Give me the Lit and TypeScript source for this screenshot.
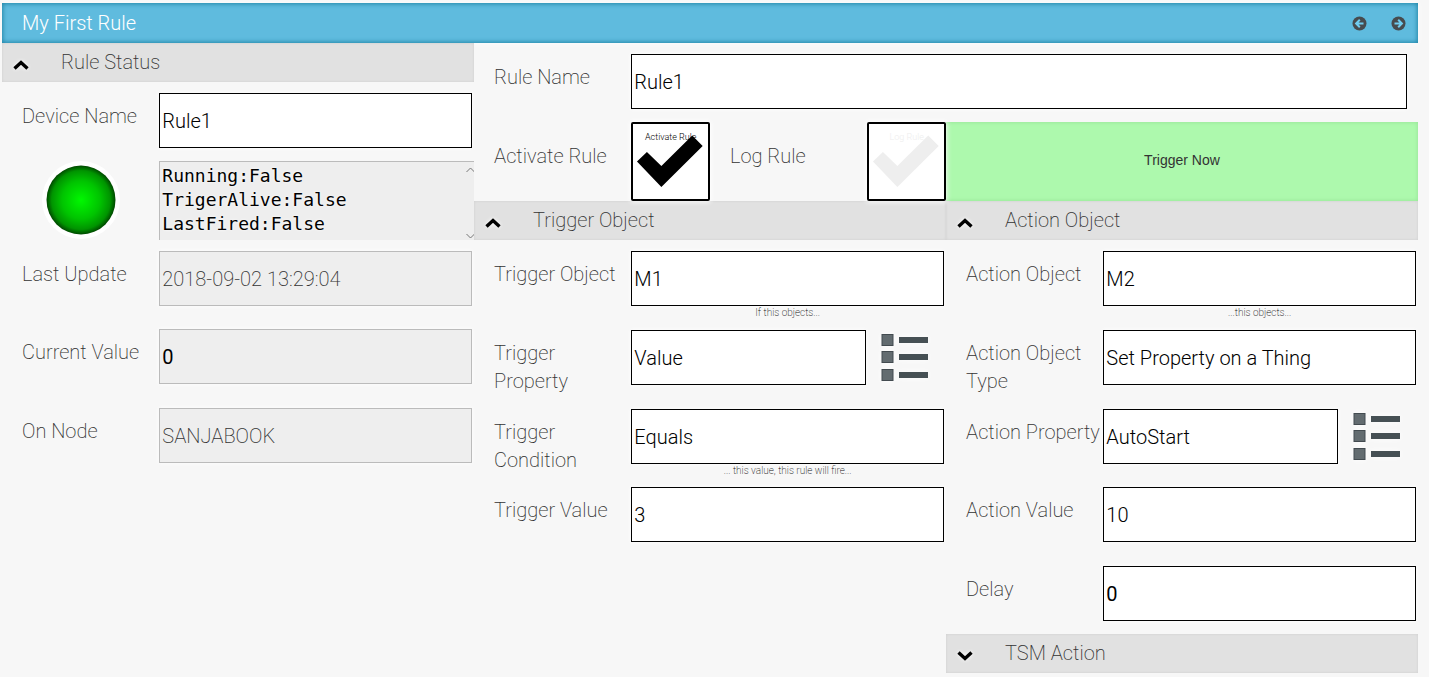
import { LitElement, html, css, svg, nothing } from "lit";
import { customElement, property, state } from "lit/decorators.js";
import { classMap } from "lit/directives/class-map.js";

interface Field {
  id: string;
  label: string;
  value: string;
  hint?: string;
  locked?: boolean;
  numeric?: boolean;
  picker?: boolean;
}

const STATUS_FIELDS: Field[] = [
  { id: "last-update", label: "Last Update", value: "2018-09-02 13:29:04", locked: true },
  { id: "current-value", label: "Current Value", value: "0", locked: true, numeric: true },
  { id: "on-node", label: "On Node", value: "SANJABOOK", locked: true },
];

const TRIGGER_FIELDS: Field[] = [
  { id: "trigger-object", label: "Trigger Object", value: "M1", hint: "If this objects..." },
  { id: "trigger-property", label: "Trigger Property", value: "Value", picker: true },
  { id: "trigger-condition", label: "Trigger Condition", value: "Equals", hint: "... this value, this rule will fire..." },
  { id: "trigger-value", label: "Trigger Value", value: "3" },
];

const ACTION_FIELDS: Field[] = [
  { id: "action-object", label: "Action Object", value: "M2", hint: "...this objects..." },
  { id: "action-type", label: "Action Object Type", value: "Set Property on a Thing" },
  { id: "action-property", label: "Action Property", value: "AutoStart", picker: true },
  { id: "action-value", label: "Action Value", value: "10" },
  { id: "delay", label: "Delay", value: "0", numeric: true },
];

const STATUS_TEXT = "Running:False\nTrigerAlive:False\nLastFired:False";

@customElement("rule-section")
class RuleSection extends LitElement {
  @property() heading = "";
  @property({ type: Boolean }) open = false;

  static styles = css`
    :host { display: block; min-width: 0; }
    .bar {
      display: flex;
      align-items: center;
      gap: 32px;
      width: 100%;
      height: 39px;
      padding: 0 11px;
      border: 0;
      background: #e1e1e1;
      box-shadow: inset 0 0 3px #cfcfcf;
      color: #333;
      font: 200 20px/28px Roboto, sans-serif;
      text-align: left;
    }
    .bar svg { flex: none; margin-top: 4px; filter: drop-shadow(0 0 2px #fff); }
    .title { margin-top: -2px; }
    .down svg { transform: scaleY(-1); }
    .rows { display: grid; grid-auto-rows: 79px 79px 78px; }
  `;

  render() {
    return html`
      <button
        class=${classMap({ bar: true, down: !this.open })}
        aria-expanded=${this.open ? "true" : "false"}
        @click=${() => (this.open = !this.open)}
      >
        <svg width="16" height="10" viewBox="0 0 16 10" aria-hidden="true">
          <path d="M1.5 8.5 8 2.5 14.5 8.5" fill="none" stroke="#000" stroke-width="3.4" />
        </svg>
        <span class="title">${this.heading}</span>
      </button>
      ${this.open ? html`<div class="rows"><slot></slot></div>` : nothing}
    `;
  }
}

@customElement("rule-field")
class RuleField extends LitElement {
  @property({ attribute: false }) field!: Field;

  static styles = css`
    * { box-sizing: border-box; }
    :host { display: block; min-width: 0; }
    .row { display: grid; grid-template-columns: 1fr 2fr; align-items: start; }
    label {
      padding: 20px 0 0 20px;
      color: #333;
      font: 200 20px/28px Roboto, sans-serif;
    }
    .control { display: grid; grid-template-columns: minmax(0, 1fr); padding: 11px 2px 0 0; }
    .control.picker { grid-template-columns: minmax(0, 3fr) minmax(0, 1fr); }
    input {
      width: 100%;
      height: 55px;
      padding: 0 2px;
      border: 1px solid #000;
      border-radius: 0;
      background: #fff;
      box-shadow: 0 0 5px #fff;
      color: #000;
      font: 300 20px Roboto, sans-serif;
    }
    input.locked { border-color: #bbb; background: #eee; color: #333; font-weight: 200; }
    input.numeric { color: #000; font-weight: 400; }
    .hint {
      color: #111;
      font: 200 10px/13px Roboto, sans-serif;
      text-align: center;
    }
    .pick {
      display: grid;
      place-items: center;
      padding: 0;
      border: 0;
      background: none;
    }
    .pick svg { filter: drop-shadow(0 0 3px #fff); }
  `;

  render() {
    const f = this.field;
    return html`
      <div class="row">
        <label for=${f.id}>${f.label}</label>
        <div class=${classMap({ control: true, picker: !!f.picker })}>
          <input
            id=${f.id}
            class=${classMap({ locked: !!f.locked, numeric: !!f.numeric })}
            .value=${f.value}
            ?readonly=${!!f.locked}
          />
          ${f.picker
            ? html`<button class="pick" aria-label="Choose property">
                <svg width="48" height="48" viewBox="0 0 48 48" aria-hidden="true">
                  ${[0, 17, 35].map(
                    (y) => svg`
                      <rect x="1" y=${y + 0.5} width="11" height="11" fill="#636c70" stroke="#434b50" />
                      <rect x="18" y=${y + 3} width="29" height="6" fill="#465054" />`
                  )}
                </svg>
              </button>`
            : nothing}
          ${f.hint ? html`<div class="hint">${f.hint}</div>` : nothing}
        </div>
      </div>
    `;
  }
}

@customElement("app-root")
class AppRoot extends LitElement {
  @state() activate = true;
  @state() log = false;

  static styles = css`
    * { box-sizing: border-box; }
    :host {
      display: block;
      min-height: 100vh;
      padding: 3px 11px 0 2px;
      box-sizing: border-box;
      background: #f7f7f7;
      color: #333;
      font: 200 20px/28px Roboto, sans-serif;
    }
    .titlebar {
      display: flex;
      align-items: center;
      justify-content: space-between;
      height: 40px;
      padding: 0 12px 0 20px;
      background: #5fbbde;
      box-shadow: inset 0 0 4px 1px #2287a9, 0 0 6px #fff;
      color: #fff;
    }
    h1 { margin: 0; font: inherit; font-weight: 300; }
    nav { display: flex; gap: 24px; }
    nav button { display: flex; padding: 0; border: 0; background: none; }
    .page { display: grid; grid-template-columns: minmax(0, 1fr) minmax(0, 2fr); }
    .cell { display: grid; grid-template-columns: 1fr 2fr; min-height: 0; }
    .led { display: grid; justify-content: center; align-content: start; }
    .console { position: relative; overflow: hidden; }
    textarea {
      display: block;
      width: 100%;
      height: 79px;
      padding: 2px;
      border: solid #bbb;
      border-width: 1px 0 0 1px;
      border-radius: 0;
      background: #eee;
      color: #000;
      font: 18px/24px "DejaVu Sans Mono", monospace;
      text-shadow: 0 0 3px #fff;
      white-space: pre;
      resize: none;
      overflow: hidden;
    }
    .scroll { position: absolute; top: 0; right: 0; pointer-events: none; }
    .top { display: grid; grid-template-columns: repeat(12, minmax(0, 1fr)); grid-auto-rows: 79px; }
    .label { grid-column: span 2; padding: 20px 0 0 20px; }
    .name { grid-column: span 10; padding: 11px 11px 0 0; }
    .name input {
      width: 100%;
      height: 55px;
      padding: 0 2px;
      border: 1px solid #000;
      border-radius: 0;
      background: #fff;
      box-shadow: 0 0 5px #fff;
      color: #000;
      font: 300 20px Roboto, sans-serif;
    }
    .toggle {
      position: relative;
      border: 2px solid #000;
      border-radius: 2px;
      background: #fff;
      box-shadow: 0 0 5px 1px #fff;
      color: #000;
    }
    .toggle input { position: absolute; inset: 0; width: 100%; height: 100%; margin: 0; opacity: 0; }
    .toggle svg { position: absolute; inset: 0; width: 100%; height: 100%; }
    .toggle span {
      display: block;
      padding-top: 7px;
      font: 300 9px/13px Roboto, sans-serif;
      text-align: center;
      white-space: nowrap;
    }
    .toggle.off { color: #eee; }
    .fire {
      grid-column: span 6;
      padding: 0 0 4px;
      border: 0;
      background: #adf9ad;
      box-shadow: inset 0 0 4px #95e295;
      color: #333;
      font: 14px "Liberation Sans", Arial, sans-serif;
    }
    .objects { display: grid; grid-template-columns: repeat(2, minmax(0, 1fr)); align-items: start; }
  `;

  private toggle(text: string, on: boolean, id: string, change: () => void) {
    return html`
      <div class=${classMap({ toggle: true, off: !on })}>
        <span>${text}</span>
        <svg viewBox="0 0 75 75" aria-hidden="true">
          <path d="M4 37.500 14 28 28.500 42 59.500 11.500 70 22 28.500 63Z" fill="currentColor" />
        </svg>
        <input type="checkbox" id=${id} .checked=${on} @change=${change} />
      </div>
    `;
  }

  private arrow(label: string, path: string) {
    return html`
      <button aria-label=${label}>
        <svg width="15" height="15" viewBox="0 0 15 15" aria-hidden="true">
          <circle cx="7.5" cy="7.5" r="7" fill="#474b4e" />
          <path d=${path} fill="none" stroke="#70cdf0" stroke-width="2" />
        </svg>
      </button>
    `;
  }

  private fields(list: Field[]) {
    return list.map((f) => html`<rule-field .field=${f}></rule-field>`);
  }

  render() {
    return html`
      <header class="titlebar">
        <h1>My First Rule</h1>
        <nav>
          ${this.arrow("Back", "M11.500 7.500H4.500M7.800 3.800 4.100 7.500 7.800 11.200")}
          ${this.arrow("Forward", "M3.500 7.500H10.500M7.200 3.800 10.900 7.500 7.200 11.200")}
        </nav>
      </header>
      <main class="page">
        <rule-section heading="Rule Status" open>
          <rule-field .field=${{ id: "device-name", label: "Device Name", value: "Rule1" }}></rule-field>
          <div class="cell">
            <div class="led">
              <svg width="78" height="78" viewBox="0 0 78 78" role="img" aria-label="Status">
                <defs>
                  <radialGradient id="glow">
                    <stop offset="0" stop-color="#00f800" />
                    <stop offset="0.55" stop-color="#00c400" />
                    <stop offset="0.85" stop-color="#009400" />
                    <stop offset="1" stop-color="#004800" />
                  </radialGradient>
                </defs>
                <circle cx="39" cy="39" r="39" fill="#fff" />
                <circle cx="39" cy="39" r="34.500" fill="url(#glow)" />
              </svg>
            </div>
            <div class="console">
              <textarea readonly aria-label="Rule state" .value=${STATUS_TEXT}></textarea>
              <svg class="scroll" width="10" height="79" viewBox="0 0 10 79" aria-hidden="true">
                <path d="M2.500 11 6.500 7 10.500 11M2.500 73 6.500 77 10.500 73" fill="none" stroke="#777" />
              </svg>
            </div>
          </div>
          ${this.fields(STATUS_FIELDS)}
        </rule-section>
        <div>
          <div class="top">
            <label class="label" for="rule-name">Rule Name</label>
            <div class="name"><input id="rule-name" value="Rule1" /></div>
            <label class="label" for="activate">Activate Rule</label>
            ${this.toggle("Activate Rule", this.activate, "activate", () => (this.activate = !this.activate))}
            <label class="label" for="log">Log Rule</label>
            ${this.toggle("Log Rule", this.log, "log", () => (this.log = !this.log))}
            <button class="fire">Trigger Now</button>
          </div>
          <div class="objects">
            <rule-section heading="Trigger Object" open>${this.fields(TRIGGER_FIELDS)}</rule-section>
            <div>
              <rule-section heading="Action Object" open>${this.fields(ACTION_FIELDS)}</rule-section>
              <rule-section heading="TSM Action"></rule-section>
            </div>
          </div>
        </div>
      </main>
    `;
  }
}
